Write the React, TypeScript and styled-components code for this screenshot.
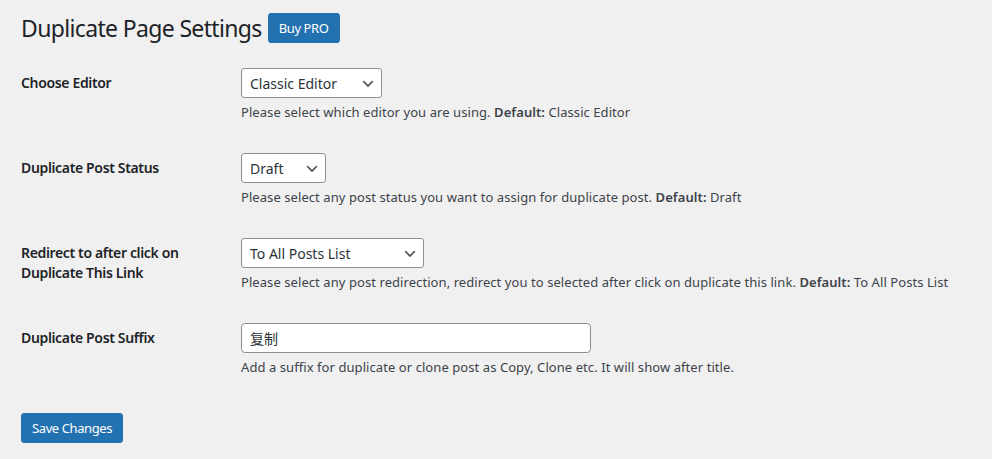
import React from 'react'
import styled, { createGlobalStyle } from 'styled-components'

const GlobalStyle = createGlobalStyle`
  html, body {
    margin: 0;
    padding: 0;
    background: #f0f0f1;
  }
  body {
    font-family: "Noto Sans", "Noto Sans CJK SC", sans-serif;
    color: #1d2327;
    font-size: 13px;
  }
`

const Wrap = styled.div`
  padding: 13px 20px 20px 21px;
`

const Header = styled.div`
  display: flex;
  align-items: center;
  gap: 6px;
  height: 30px;
`

const Title = styled.h1`
  margin: 0;
  font-size: 23px;
  font-weight: 400;
  line-height: 30px;
  letter-spacing: -0.65px;
  color: #1d2327;
`

const Button = styled.button`
  font-family: inherit;
  font-size: 13px;
  letter-spacing: -0.4px;
  height: 30px;
  padding: 0 10px;
  border: 1px solid #2271b1;
  border-radius: 3px;
  background: #2271b1;
  color: #fff;
  cursor: pointer;
`

const Table = styled.div`
  margin-top: 10px;
  display: flex;
  flex-direction: column;
`

const Row = styled.div`
  display: grid;
  grid-template-columns: 210px 1fr;
`

const Label = styled.div`
  padding: 20px 10px 20px 0;
  font-size: 14px;
  font-weight: 600;
  line-height: 20px;
  letter-spacing: -0.35px;
  color: #1d2327;
`

const Field = styled.div`
  padding: 15px 10px;
`

const SelectBox = styled.div<{ $width: number }>`
  position: relative;
  width: ${(p) => p.$width}px;
  height: 30px;
`

const Select = styled.select`
  appearance: none;
  width: 100%;
  height: 30px;
  box-sizing: border-box;
  padding: 0 24px 0 8px;
  font-family: inherit;
  font-size: 14px;
  color: #2c3338;
  background: #fff;
  border: 1px solid #8c8f94;
  border-radius: 3px;
`

const Chevron = styled.svg`
  position: absolute;
  right: 6px;
  top: 8px;
  width: 16px;
  height: 16px;
  pointer-events: none;
`

const TextInput = styled.input`
  width: 350px;
  height: 30px;
  box-sizing: border-box;
  padding: 0 8px;
  font-family: "Noto Sans", "Noto Sans CJK SC", sans-serif;
  font-size: 14px;
  color: #2c3338;
  background: #fff;
  border: 1px solid #8c8f94;
  border-radius: 4px;
`

const Description = styled.p`
  margin: 4px 0 0;
  font-size: 13px;
  line-height: 21px;
  letter-spacing: 0.07px;
  color: #3c434a;

  b {
    font-weight: 600;
  }
`

const Submit = styled.div`
  margin-top: 20px;
`

function Dropdown({ width, options }: { width: number; options: string[] }) {
  return (
    <SelectBox $width={width}>
      <Select defaultValue={options[0]}>
        {options.map((o) => (
          <option key={o}>{o}</option>
        ))}
      </Select>
      <Chevron viewBox="0 0 20 20">
        <path d="M5 6l5 5 5-5 2 1-7 7-7-7 2-1z" fill="#50575e" />
      </Chevron>
    </SelectBox>
  )
}

export default function App() {
  return (
    <Wrap>
      <GlobalStyle />
      <Header>
        <Title>Duplicate Page Settings</Title>
        <Button>Buy PRO</Button>
      </Header>
      <Table>
        <Row>
          <Label>Choose Editor</Label>
          <Field>
            <Dropdown width={141} options={['Classic Editor', 'Gutenberg Editor']} />
            <Description>
              Please select which editor you are using. <b>Default:</b> Classic Editor
            </Description>
          </Field>
        </Row>
        <Row>
          <Label>Duplicate Post Status</Label>
          <Field>
            <Dropdown width={85} options={['Draft', 'Publish', 'Private', 'Pending']} />
            <Description>
              Please select any post status you want to assign for duplicate post. <b>Default:</b> Draft
            </Description>
          </Field>
        </Row>
        <Row>
          <Label>
            Redirect to after click on
            <br />
            Duplicate This Link
          </Label>
          <Field>
            <Dropdown width={183} options={['To All Posts List', 'To Duplicate Edit Screen']} />
            <Description>
              Please select any post redirection, redirect you to selected after click on duplicate this link.{' '}
              <b>Default:</b> To All Posts List
            </Description>
          </Field>
        </Row>
        <Row>
          <Label>Duplicate Post Suffix</Label>
          <Field>
            <TextInput defaultValue="复制" />
            <Description>Add a suffix for duplicate or clone post as Copy, Clone etc. It will show after title.</Description>
          </Field>
        </Row>
      </Table>
      <Submit>
        <Button>Save Changes</Button>
      </Submit>
    </Wrap>
  )
}
